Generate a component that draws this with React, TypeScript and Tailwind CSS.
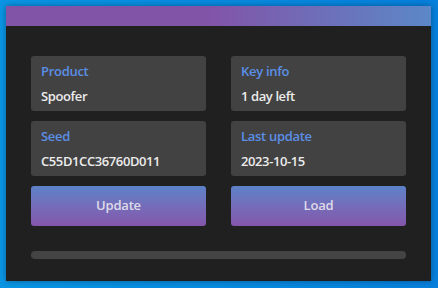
import React from "react";

const font = { fontFamily: '"Open Sans", "Noto Sans", "Liberation Sans", sans-serif' };

function InfoCard({ label, value }: { label: string; value: string }) {
  return (
    <div className="h-[55px] rounded-[3px] bg-[#424242] px-[10px] pt-[6px]">
      <p className="text-[13px] leading-[18px] font-semibold tracking-[-0.3px] text-[#5b8fe6]">{label}</p>
      <p className="mt-[7px] text-[13px] leading-[18px] font-semibold tracking-[-0.4px] text-[#ececec]">{value}</p>
    </div>
  );
}

function GradientButton({ children }: { children: React.ReactNode }) {
  return (
    <button className="h-[40px] rounded-[3px] bg-gradient-to-b from-[#5b82c8] to-[#8456ab] text-[13px] font-semibold tracking-[-0.2px] text-[#dedbe8]">
      {children}
    </button>
  );
}

export default function App(): JSX.Element {
  return (
    <div
      className="w-[438px] h-[288px] bg-gradient-to-r from-[#0a95e4] to-[#0780dc] p-[6px] pr-[7px] pb-[7px]"
      style={font}
    >
      <div className="w-[425px] h-[275px] bg-[#202020] shadow-[0_0_6px_rgba(0,0,0,0.35)] flex flex-col">
        <div className="h-[20px] bg-[linear-gradient(to_right,#8254a8_48%,#5b88c8_100%)]" />

        <div className="px-[25px] pt-[30px] flex flex-col">
          <div className="grid grid-cols-2 gap-x-[25px] gap-y-[10px]">
            <InfoCard label="Product" value="Spoofer" />
            <InfoCard label="Key info" value="1 day left" />
            <InfoCard label="Seed" value="C55D1CC36760D011" />
            <InfoCard label="Last update" value="2023-10-15" />
            <GradientButton>Update</GradientButton>
            <GradientButton>Load</GradientButton>
          </div>

          <div className="mt-[25px] h-[8px] rounded-full bg-[#444444]" />
        </div>
      </div>
    </div>
  );
}
